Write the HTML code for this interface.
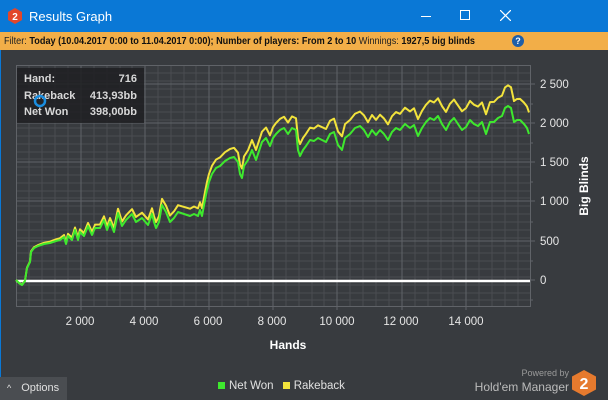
<!DOCTYPE html>
<html><head><meta charset="utf-8"><style>
*{margin:0;padding:0;box-sizing:border-box}
body{width:608px;height:400px;overflow:hidden;background:#383b3f;font-family:"Liberation Sans",sans-serif;position:relative}
.title{position:absolute;left:0;top:0;width:608px;height:32px;background:#0a78d6;color:#fff;font-size:13px}
.filter{position:absolute;left:0;top:32px;width:608px;height:18px;background:#f2ae48;font-size:10.5px;color:#222;line-height:18px;white-space:nowrap}
.filter .t{position:absolute;left:4px;top:0;transform:scaleX(0.87);transform-origin:left center}
.filter b{font-weight:bold;color:#111}
.lb{position:absolute;left:0;top:50px;width:1px;height:350px;background:#0a78d6}
.tip{position:absolute;left:17px;top:68px;width:127px;height:55px;background:rgba(30,32,34,.85);color:#d8d8d8;font-size:11px;font-weight:bold}
.tip div{position:absolute;left:7px;right:7px;height:16px}
.tip span{position:absolute;right:0}
</style></head><body>
<div class="title">
 <svg style="position:absolute;left:8px;top:8px" width="14" height="16" viewBox="0 0 14 16"><path d="M7 0L14 4V12L7 16L0 12V4Z" fill="#e2472a"/><text x="7" y="12" font-size="10" font-weight="bold" fill="#fff" text-anchor="middle" font-family="Liberation Sans">2</text></svg>
 <span style="position:absolute;left:29px;top:9px">Results Graph</span>
 <div style="position:absolute;left:421px;top:16px;width:10px;height:1px;background:#fff"></div>
 <div style="position:absolute;left:460px;top:10px;width:10px;height:10px;border:1px solid #fff"></div>
 <svg style="position:absolute;left:500px;top:10px" width="11" height="11"><path d="M0 0L11 11M11 0L0 11" stroke="#fff" stroke-width="1.2"/></svg>
</div>
<div class="filter"><span class="t">Filter: <b>Today (10.04.2017 0:00 to 11.04.2017 0:00); Number of players: From 2 to 10</b> Winnings: <b>1927,5 big blinds</b></span>
 <div style="position:absolute;left:512px;top:3px;width:12px;height:12px;border-radius:50%;background:#1e5fa8;color:#fff;font-size:9px;line-height:12px;text-align:center;font-weight:bold">?</div>
</div>
<div class="lb"></div>
<svg style="position:absolute;left:0;top:0" width="608" height="400">
 <g stroke="#4a4d52" stroke-width="1">
  <path d="M16 73H530M16 81H530M16 89H530M16 97H530M16 104H530M16 112H530M16 120H530M16 128H530M16 136H530M16 144H530M16 152H530M16 159H530M16 167H530M16 175H530M16 183H530M16 191H530M16 198H530M16 206H530M16 214H530M16 222H530M16 230H530M16 238H530M16 246H530M16 253H530M16 261H530M16 269H530M16 277H530M16 285H530M16 293H530M16 300H530"/>
  <path d="M29 66V306M42 66V306M55 66V306M68 66V306M94 66V306M107 66V306M120 66V306M132 66V306M158 66V306M171 66V306M184 66V306M196 66V306M222 66V306M235 66V306M248 66V306M260 66V306M286 66V306M299 66V306M312 66V306M324 66V306M350 66V306M363 66V306M376 66V306M389 66V306M415 66V306M428 66V306M441 66V306M453 66V306M479 66V306M492 66V306M505 66V306M518 66V306"/>
 </g>
 <g stroke="#606368" stroke-width="1">
  <path d="M16 84H530M16 123H530M16 162H530M16 201H530M16 241H530"/>
  <path d="M81 66V306M145 66V306M209 66V306M273 66V306M337 66V306M402 66V306M466 66V306"/>
  <rect x="16.5" y="65.5" width="514" height="241" fill="none"/>
  <path d="M530 84h5M530 123h5M530 162h5M530 201h5M530 241h5M530 280h5M530 104h3M530 143h3M530 182h3M530 222h3M530 261h3M530 300h3"/>
  <path d="M81 306v4M145 306v4M209 306v4M273 306v4M337 306v4M402 306v4M466 306v4"/>
 </g>
 <line x1="16" y1="281" x2="530" y2="281" stroke="#fff" stroke-width="2.5"/>
 <defs><polyline id="c" fill="none" stroke-width="2" stroke-linejoin="round" points="16,280 19,283 22,285 25,281 27,268 30,262 31,252 34,248 38,246 44,244 50,243 56,241 60,240 64,237 66,244 68,236 72,240 75,230 78,240 80,232 84,236 88,226 92,235 95,228 100,228 104,220 107,230 110,222 114,232 118,213 122,226 126,220 132,214 136,222 142,218 148,225 152,214 154,222 156,228 159,222 162,205 166,212 170,222 174,218 178,212 184,214 190,216 194,214 198,216 200,210 202,216 205,200 207,190 209,182 212,174 216,168 220,166 225,161 230,158 234,157 238,162 240,174 242,178 244,166 248,160 252,150 256,160 258,154 262,142 266,138 270,146 273,138 276,134 280,130 284,128 288,134 292,128 296,130 298,150 300,156 303,150 306,146 310,140 314,141 318,138 322,140 326,142 330,134 334,132 338,145 342,150 345,138 350,134 355,128 360,126 364,130 368,137 372,130 376,135 380,130 384,134 388,140 392,132 396,128 400,130 405,124 410,128 414,125 418,136 422,128 426,122 430,118 434,120 438,116 442,124 446,130 450,122 454,118 458,124 462,130 466,127 470,120 474,124 478,126 482,122 486,134 490,122 494,122 498,118 502,116 505,108 508,106 511,108 514,122 517,120 520,120 524,124 527,128 529,134"/></defs>
 <use href="#c" stroke="#f2e33c" transform="matrix(1 -0.042 0 1 0 0.672)"/>
 <use href="#c" stroke="#3ee82e"/>
 <text x="288" y="349" fill="#fff" font-size="12" font-weight="bold" text-anchor="middle" font-family="Liberation Sans">Hands</text>
 <text transform="translate(588 186) rotate(-90)" fill="#fff" font-size="12" font-weight="bold" text-anchor="middle" font-family="Liberation Sans">Big Blinds</text>
 <g fill="#e6e6e6" font-size="11.5" font-family="Liberation Sans">
  <text x="540" y="88">2 500</text><text x="540" y="127">2 000</text><text x="540" y="166">1 500</text><text x="540" y="205">1 000</text><text x="540" y="245">500</text><text x="540" y="284">0</text>
 </g>
 <g fill="#e6e6e6" font-size="11.5" font-family="Liberation Sans" text-anchor="middle">
  <text x="80" y="325">2 000</text><text x="144" y="325">4 000</text><text x="208" y="325">6 000</text><text x="272" y="325">8 000</text><text x="337" y="325">10 000</text><text x="401" y="325">12 000</text><text x="466" y="325">14 000</text>
 </g>
</svg>
<div class="tip">
 <div style="top:5px">Hand:<span>716</span></div>
 <div style="top:22px">Rakeback<span>413,93bb</span></div>
 <div style="top:38px">Net Won<span>398,00bb</span></div>
</div>
<svg style="position:absolute;left:0;top:0" width="608" height="400"><circle cx="40" cy="101" r="5" fill="none" stroke="#1a8ee0" stroke-width="2.5"/></svg>
<div style="position:absolute;left:0;top:377px;width:67px;height:23px;background:#4a4d51;color:#e0e0e0;font-size:11px;line-height:23px"><span style="margin-left:7px;font-size:9px">^</span><span style="margin-left:10px">Options</span></div>
<div style="position:absolute;left:218px;top:380px;font-size:11.5px;color:#e0e0e0;white-space:nowrap"><span style="display:inline-block;width:7px;height:7px;background:#3ee82e;margin-right:4px"></span>Net Won <span style="display:inline-block;width:7px;height:7px;background:#f2e33c;margin:0 4px 0 6px"></span>Rakeback</div>
<div style="position:absolute;left:470px;top:368px;font-size:9px;color:#9a9a9a;text-align:right;width:99px;white-space:nowrap">Powered by</div>
<div style="position:absolute;left:440px;top:380px;font-size:12px;color:#bbb;text-align:right;width:129px;white-space:nowrap">Hold'em Manager</div>
<svg style="position:absolute;left:572px;top:370px" width="24" height="26" viewBox="0 0 24 26"><path d="M12 0L24 6.5V19.5L12 26L0 19.5V6.5Z" fill="#e67a2e"/><text x="12" y="19" font-size="16" font-weight="bold" fill="#fff" text-anchor="middle" font-family="Liberation Sans">2</text></svg>
</body></html>
